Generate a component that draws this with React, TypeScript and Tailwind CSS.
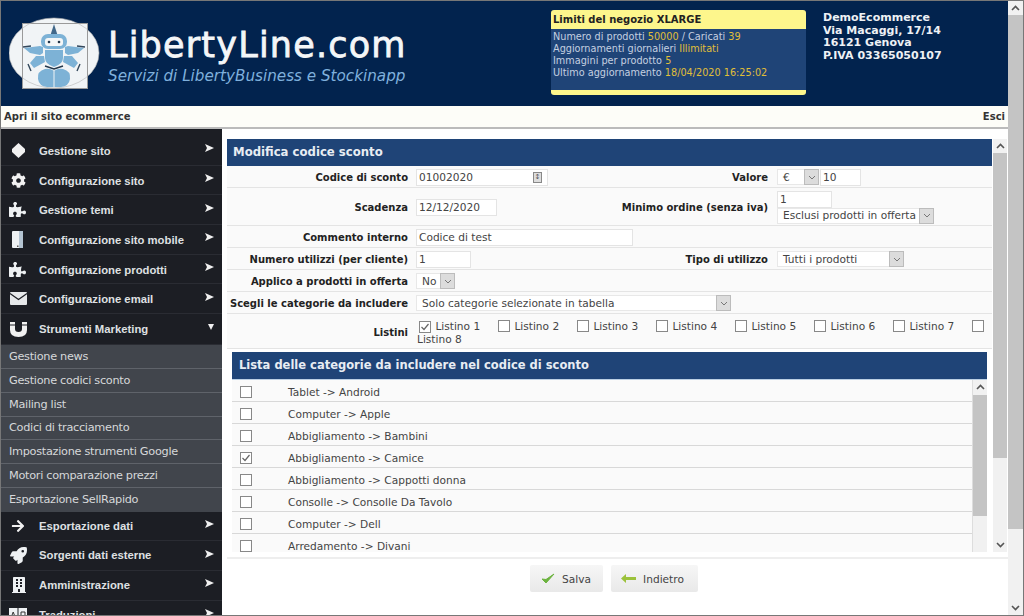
import React from "react";
import { FaArrowRight, FaBuilding, FaCog, FaPuzzlePiece, FaRocket } from "react-icons/fa";

const Chevron: React.FC<{ up?: boolean }> = ({ up }) => (
  <svg width="9" height="6" viewBox="0 0 9 6" className="shrink-0">
    <path d={up ? "M1 5l3.5-3.5L8 5" : "M1 1l3.5 3.5L8 1"} fill="none" stroke="#555" strokeWidth="1.6" />
  </svg>
);

const Scrollbar: React.FC<{ width: string; thumb: string; hideDown?: boolean }> = ({ width, thumb, hideDown }) => (
  <div className={`${width} shrink-0 h-full flex flex-col bg-[#f1f1f1]`}>
    <div className="h-[14px] shrink-0 flex items-center justify-center">
      <Chevron up />
    </div>
    <div className="flex-1 min-h-0">
      <div className={`${thumb} bg-[#c4c4c4]`} />
    </div>
    {!hideDown && (
      <div className="h-[14px] shrink-0 flex items-center justify-center">
        <Chevron />
      </div>
    )}
  </div>
);

const Logo = () => (
  <svg width="92" height="72" viewBox="0 0 92 72" className="shrink-0">
    <ellipse cx="45" cy="36" rx="45" ry="35" fill="#f1f4f6" />
    <rect x="13.5" y="6.500" width="65" height="65" fill="#f1f4f6" stroke="#9a9a9a" />
    <ellipse cx="45" cy="36" rx="45" ry="35" fill="none" stroke="#b5b5b5" strokeWidth="0.6" />
    <path d="M45 7l3.500 11h-7z" fill="#41688a" />
    <rect x="32" y="17" width="26" height="15" rx="7" fill="#7db2d6" />
    <rect x="36" y="21" width="18" height="8" rx="3" fill="#f5f7f8" />
    <circle cx="40" cy="25" r="1.300" fill="#22364a" />
    <circle cx="50" cy="25" r="1.300" fill="#22364a" />
    <path d="M36 33h18v8q0 6-9 9q-9-3-9-9z" fill="#7db2d6" />
    <path d="M15 31l16-2 3 1v6l-3 2-10-2z" fill="#7db2d6" />
    <path d="M75 31l-16-2-3 1v6l3 2 10-2z" fill="#7db2d6" />
    <path d="M35 39l-8 0-6 7 4 5 11-6z" fill="#7db2d6" />
    <path d="M55 39l8 0 6 7-4 5-11-6z" fill="#7db2d6" />
    <path d="M14 30l8-1M76 30l-8-1M19 47l3 7M71 47l-3 7" stroke="#33485c" strokeWidth="1.400" />
    <path d="M36 49l9 3 9-3" fill="none" stroke="#22364a" strokeWidth="1.400" />
    <path d="M45 54q-4-3-9-2q-8 2-7 10q1 7 9 8h14q8-1 9-8q1-8-7-10q-5-1-9 2z" fill="#7db2d6" />
    <path d="M45 54v16" stroke="#f1f4f6" strokeWidth="1" />
  </svg>
);

const Diamond = () => (
  <svg width="15" height="15" viewBox="0 0 15 15" className="ml-[2px]"><path d="M7.500 0L14 6v3l-6.500 6L1 9V6z" fill="#f1f1f1" /></svg>
);
const Mobile = () => (
  <svg width="12" height="17" viewBox="0 0 12 17" className="ml-[3px]"><rect width="11" height="17" rx="1" fill="#eef1f3" /><rect x="7" width="4" height="17" fill="#b4c4d2" /><rect x="5" y="14.500" width="1.500" height="1.500" fill="#555" /></svg>
);
const Magnet = () => (
  <svg width="17" height="15" viewBox="0 0 17 15" className="ml-px"><path d="M0 0h5v7q0 3 3.500 3T12 7V0h5v8q0 7-8.500 7T0 8z" fill="#f1f1f1" /><path d="M0 3h5M12 3h5" stroke="#1c1e24" strokeWidth="1" /></svg>
);
const Mail = () => (
  <svg width="17" height="13" viewBox="0 0 17 13" className="ml-px"><rect width="17" height="13" rx="1" fill="#e6e8ea" /><path d="M0 1.500l8.500 6 8.500-6" fill="none" stroke="#1c1e24" strokeWidth="1.200" /></svg>
);
const Lang = () => (
  <svg width="18" height="14" viewBox="0 0 18 14"><rect width="8.500" height="14" fill="#eef1f3" /><rect x="9.500" width="8.500" height="14" fill="#eef1f3" /><path d="M2 10l2.200-6L6.500 10M12 4h4v6h-4z" fill="none" stroke="#333" /></svg>
);

const ArrowRight = () => (
  <svg width="9" height="8" viewBox="0 0 9 8"><path d="M0 0l9 4-9 4 2-4z" fill="#f0f0f0" /></svg>
);
const ArrowDown = () => (
  <svg width="6" height="6" viewBox="0 0 6 6"><path d="M0 0h6L3 6z" fill="#f0f0f0" /></svg>
);

const MenuItem: React.FC<{ icon: React.ReactNode; label: string; open?: boolean; tall?: boolean; high?: boolean }> = ({ icon, label, open, tall, high }) => (
  <div className={`${tall ? "h-[31px]" : "h-[29.7px]"} shrink-0 flex items-center border-b border-[#2a2c33] pl-[8px] pr-[8px] text-[#dfe0e2]`}>
    <span className="w-[30px] shrink-0 flex items-center">{icon}</span>
    <span className={`flex-1 font-bold text-[11.300px] whitespace-nowrap ${high ? "" : "pt-[2px]"}`}>{label}</span>
    <span className="relative -top-[2px]">{open ? <ArrowDown /> : <ArrowRight />}</span>
  </div>
);

const subItems = [
  "Gestione news",
  "Gestione codici sconto",
  "Mailing list",
  "Codici di tracciamento",
  "Impostazione strumenti Google",
  "Motori comparazione prezzi",
  "Esportazione SellRapido",
];

const Sidebar = () => (
  <div className="w-[221px] shrink-0 h-full overflow-hidden bg-[#1c1e24] pt-[7px] font-['Liberation_Sans',sans-serif]">
    <MenuItem icon={<Diamond />} label="Gestione sito" />
    <MenuItem icon={<FaCog size={15} color="#f1f1f1" className="ml-[2px]" />} label="Configurazione sito" />
    <MenuItem icon={<FaPuzzlePiece size={17} color="#eef1f3" />} label="Gestione temi" />
    <MenuItem icon={<Mobile />} label="Configurazione sito mobile" />
    <MenuItem icon={<FaPuzzlePiece size={17} color="#eef1f3" />} label="Configurazione prodotti" />
    <MenuItem icon={<Mail />} label="Configurazione email" />
    <MenuItem icon={<Magnet />} label="Strumenti Marketing" open tall high />
    <div className="bg-[#41454c]">
      {subItems.map((s, i) => (
        <div
          key={s}
          className={`h-[23.800px] flex items-center pl-[8px] pt-[2px] text-[11.300px] text-[#d6d8da] font-['DejaVu_Sans',sans-serif] tracking-[-0.3px] ${i < subItems.length - 1 ? "border-b border-[#5f636a]" : ""}`}
        >
          {s}
        </div>
      ))}
    </div>
    <MenuItem icon={<FaArrowRight size={14} color="#f1f1f1" className="ml-[2px]" />} label="Esportazione dati" high />
    <MenuItem icon={<FaRocket size={17} color="#eef1f3" className="ml-px" />} label="Sorgenti dati esterne" high />
    <MenuItem icon={<FaBuilding size={16} color="#eef1f3" className="ml-[2px]" />} label="Amministrazione" high />
    <MenuItem icon={<Lang />} label="Traduzioni" high />
  </div>
);

const Input: React.FC<{ value: string; className: string; children?: React.ReactNode }> = ({ value, className, children }) => (
  <div className={`${className} h-[17px] bg-white border border-[#e4e4e4] flex items-center px-[2px] text-[#444] whitespace-nowrap`}>
    <span className="flex-1 pt-px">{value}</span>
    {children}
  </div>
);

const Select: React.FC<{ value: string; className: string }> = ({ value, className }) => (
  <div className={`${className} h-[16px] bg-white border-y border-l border-[#e8e8e8] flex items-center pl-[5px] text-[#444] whitespace-nowrap`}>
    <span className="flex-1 pt-px">{value}</span>
    <span className="w-[15px] h-[16px] shrink-0 bg-[#dcdcdc] border border-[#bcbcbc] flex items-center justify-center">
      <svg width="8" height="5" viewBox="0 0 8 5"><path d="M1 1l3 3 3-3" fill="none" stroke="#777" strokeWidth="1" /></svg>
    </span>
  </div>
);

const Box: React.FC<{ checked?: boolean }> = ({ checked }) => (
  <span className="inline-flex align-[-2px] w-[12px] h-[12px] bg-white border border-[#888] items-center justify-center">
    {checked && (
      <svg width="10" height="10" viewBox="0 0 10 10"><path d="M1.500 5l2.500 2.500L8.500 2" fill="none" stroke="#666" strokeWidth="1.200" /></svg>
    )}
  </span>
);

const Label: React.FC<{ children: React.ReactNode }> = ({ children }) => (
  <div className="text-right font-bold text-[10px] text-[#222] whitespace-nowrap">{children}</div>
);

const rowBase = "grid grid-cols-[181px_152px_192px_1fr] gap-x-2 items-center border-b-2 border-[#e4e4e4] bg-[#fafafa] -mb-px pt-px";

const categories = [
  "Tablet -> Android",
  "Computer -> Apple",
  "Abbigliamento -> Bambini",
  "Abbigliamento -> Camice",
  "Abbigliamento -> Cappotti donna",
  "Consolle -> Consolle Da Tavolo",
  "Computer -> Dell",
  "Arredamento -> Divani",
];

const listini = ["Listino 1", "Listino 2", "Listino 3", "Listino 4", "Listino 5", "Listino 6", "Listino 7", "Listino 8"];

const Form = () => (
  <div className="flex-1 min-w-0 h-full overflow-hidden text-[10.600px]">
    <div className="h-[27px] bg-[#1f4477] flex items-center pl-[6px] pt-px text-[11.700px] font-bold text-[#e8edf3]">Modifica codice sconto</div>
    <div className={`${rowBase} h-[23px]`}>
      <Label>Codice di sconto</Label>
      <Input value="01002020" className="w-[132px]">
        <span className="w-[9px] h-[11px] border border-[#888] bg-[#ddd] mr-[3px] text-[7px] leading-[9px] text-center text-[#555]">↕</span>
      </Input>
      <Label>Valore</Label>
      <div className="flex items-center gap-px ml-px">
        <Select value="€" className="w-[42px]" />
        <Input value="10" className="w-[41px]" />
      </div>
    </div>
    <div className={`${rowBase} h-[39px]`}>
      <Label>Scadenza</Label>
      <Input value="12/12/2020" className="w-[81px]" />
      <Label>Minimo ordine (senza iva)</Label>
      <div className="flex flex-col ml-px">
        <Input value="1" className="w-[55px]" />
        <Select value="Esclusi prodotti in offerta" className="w-[157px]" />
      </div>
    </div>
    <div className={`${rowBase} h-[23px]`}>
      <Label>Commento interno</Label>
      <div className="col-span-3">
        <Input value="Codice di test" className="w-[217px]" />
      </div>
    </div>
    <div className={`${rowBase} h-[23px]`}>
      <Label>Numero utilizzi (per cliente)</Label>
      <Input value="1" className="w-[55px]" />
      <Label>Tipo di utilizzo</Label>
      <div className="ml-px">
        <Select value="Tutti i prodotti" className="w-[127px]" />
      </div>
    </div>
    <div className={`${rowBase} h-[23px]`}>
      <Label>Applico a prodotti in offerta</Label>
      <Select value="No" className="w-[39px]" />
    </div>
    <div className={`${rowBase} h-[23px]`}>
      <Label>Scegli le categorie da includere</Label>
      <div className="col-span-3">
        <Select value="Solo categorie selezionate in tabella" className="w-[315px]" />
      </div>
    </div>
    <div className="grid grid-cols-[181px_1fr] gap-x-2 items-center h-[35px] border-b border-[#e4e4e4] bg-[#fafafa] pr-[4px] pt-[3px]">
      <Label>Listini</Label>
      <div className="leading-[13px] text-[#444]">
        {listini.map((l, i) => (
          <React.Fragment key={l}>
            <span className="inline-block w-[3px]" />
            <Box checked={i === 0} /> <span className="inline-block w-px" />{l}
            <span className="inline-block w-[11.500px]" />{" "}
          </React.Fragment>
        ))}
      </div>
    </div>
    <div className="mx-[5px] mt-[3px]">
      <div className="h-[27px] bg-[#1f4477] flex items-center pl-[7px] pt-px text-[11.500px] font-bold text-[#e8edf3]">
        Lista delle categorie da includere nel codice di sconto
      </div>
      <div className="h-[173px] flex border-t border-[#bcd0e4]">
        <div className="flex-1 min-w-0 overflow-hidden border-r border-[#ddd]">
          {categories.map((c, i) => (
            <div key={c} className="h-[22px] shrink-0 flex items-center bg-[#fafafa] border-b border-[#d8d8d8] text-[#444]">
              <span className="w-[56px] pl-[8px] pt-[2px] flex items-center"><Box checked={i === 3} /></span>
              <span className="pt-[5px]">{c}</span>
            </div>
          ))}
        </div>
        <Scrollbar width="w-[14px]" thumb="h-[121px] mt-[1px]" hideDown />
      </div>
    </div>
  </div>
);

const Button: React.FC<{ icon: React.ReactNode; label: string; className: string }> = ({ icon, label, className }) => (
  <div className={`${className} h-[27px] rounded-[2px] bg-gradient-to-b from-[#f6f6f6] to-[#e9e9e9] flex items-center justify-center gap-[7px] text-[10.600px] text-[#444]`}>
    {icon}
    <span className="pt-[2px]">{label}</span>
  </div>
);

const App = () => (
  <div className="w-[1024px] h-[616px] overflow-hidden flex bg-white border-t border-l border-b border-r border-[#777] font-['DejaVu_Sans',sans-serif]">
    <div className="w-[1007px] shrink-0 h-full flex flex-col">
      <div className="h-[105px] shrink-0 bg-[#02234e] flex">
        <div className="w-[550px] shrink-0 flex pl-[8px] pt-[16px]">
          <Logo />
          <div className="pl-[7px] text-[#f4f6f8]">
            <div className="h-[38px] mt-[9px] flex items-center text-[35px] tracking-[1.2px] [-webkit-text-stroke:0.8px_#f4f6f8] leading-none whitespace-nowrap">LibertyLine.com</div>
            <div className="mt-[3px] italic text-[15.200px] leading-[18px] text-[#7fb0dc] whitespace-nowrap">Servizi di LibertyBusiness e Stockinapp</div>
          </div>
        </div>
        <div className="w-[255px] h-[85px] mt-[9px] shrink-0 rounded-[3px] overflow-hidden flex flex-col bg-[#fdf68c]">
          <div className="h-[19px] flex items-center pl-[2px] text-[10px] font-bold text-[#222]">Limiti del negozio XLARGE</div>
          <div className="h-[61px] bg-[#1f4477] pl-[2px] pt-[2px] text-[9.700px] leading-[12px] text-[#c5d0e0] whitespace-nowrap">
            <div>Numero di prodotti <span className="text-[#e0bf38]">50000</span> / Caricati <span className="text-[#e0bf38]">39</span></div>
            <div>Aggiornamenti giornalieri <span className="text-[#e0bf38]">Illimitati</span></div>
            <div>Immagini per prodotto <span className="text-[#e0bf38]">5</span></div>
            <div>Ultimo aggiornamento <span className="text-[#e0bf38]">18/04/2020 16:25:02</span></div>
          </div>
        </div>
        <div className="pl-[17px] pt-[11px] text-[11px] leading-[12.700px] font-bold text-[#eef1f5] whitespace-nowrap">
          <div>DemoEcommerce</div>
          <div>Via Macaggi, 17/14</div>
          <div>16121 Genova</div>
          <div>P.IVA 03365050107</div>
        </div>
      </div>
      <div className="h-[23px] shrink-0 bg-[#fdfdf8] border-b-2 border-[#bbb] flex items-center justify-between px-[3px] text-[10px] font-bold text-[#333]">
        <span>Apri il sito ecommerce</span>
        <span>Esci</span>
      </div>
      <div className="flex-1 min-h-0 flex">
        <Sidebar />
        <div className="flex-1 min-w-0 flex flex-col pl-[5px] pt-[10px]">
          <div className="h-[413px] shrink-0 flex gap-px pr-[1px]">
            <Form />
            <Scrollbar width="w-[14px]" thumb="h-[305px]" />
          </div>
          <div className="mt-[5px] border-t-2 border-[#eee]" />
          <div className="flex justify-center gap-2 pt-[6px] pr-[8px]">
            <Button
              className="w-[73px]"
              label="Salva"
              icon={<svg width="14" height="11" viewBox="0 0 14 11"><path d="M1 6l4 4L13 1 5 6.500z" fill="#6cb33f" stroke="#6cb33f" /></svg>}
            />
            <Button
              className="w-[87px] pr-[3px]"
              label="Indietro"
              icon={<svg width="15" height="9" viewBox="0 0 15 9"><path d="M0 4.500L5 0v3h10v3H5v3z" fill="#9cc23c" /></svg>}
            />
          </div>
        </div>
      </div>
    </div>
    <Scrollbar width="w-[15px]" thumb="h-[514px]" />
  </div>
);

export default App;
